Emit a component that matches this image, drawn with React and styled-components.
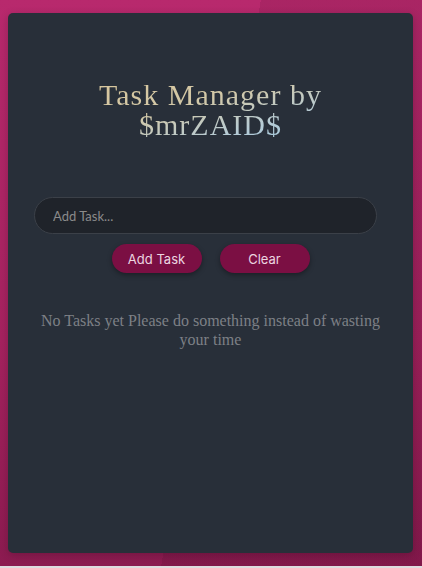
import React, { useState } from 'react'
import styled, { createGlobalStyle } from 'styled-components'

const GlobalStyle = createGlobalStyle`
    html, body {
        margin: 0;
        padding: 0;
        background-color: #dedcdf;
    }
    * {
        box-sizing: border-box;
    }
`;

const Page = styled.div`
    width: 100%;
    height: 566px;
    padding: 13px 9px 13px 8px;
    background:
        linear-gradient(100deg, rgba(0, 0, 0, 0) 50%, rgba(40, 0, 20, 0.1) 50%),
        linear-gradient(to bottom, #b8296d 0%, #a5225f 60%, #8b1b50 100%);
`;

const Card = styled.div`
    height: 540px;
    background-color: #282f39;
    border-radius: 5px;
    padding: 67px 26px 0;
    display: flex;
    flex-direction: column;
    align-items: center;
    box-shadow: 0 2px 8px rgba(0, 0, 0, 0.2);
`;

const Title = styled.h1`
    margin: 0 0 57px;
    font-family: "Liberation Serif", serif;
    font-weight: normal;
    font-size: 30px;
    line-height: 30px;
    letter-spacing: 1px;
    text-align: center;
    background: linear-gradient(165deg, #d8c69c 0%, #d2c8a8 40%, #b5cbd6 75%, #9dcae0 100%);
    -webkit-background-clip: text;
    background-clip: text;
    color: transparent;
`;

const TaskInput = styled.input`
    align-self: flex-start;
    width: 343px;
    height: 37px;
    border-radius: 19px;
    border: 1px solid #3b4048;
    background-color: #1f232a;
    padding: 0 18px;
    font-family: "Lato", sans-serif;
    font-size: 13px;
    color: #ccc;
    outline: none;

    &::placeholder {
        color: #8a8a8a;
    }
`;

const Buttons = styled.div`
    display: flex;
    gap: 18px;
    margin-top: 10px;
`;

const Button = styled.button`
    width: 90px;
    height: 29px;
    border: none;
    border-radius: 15px;
    background-color: #7b0f43;
    color: #ecd6e0;
    font-family: "Inter", sans-serif;
    font-size: 13px;
    box-shadow: 0 2px 5px rgba(0, 0, 0, 0.35);
    cursor: pointer;
`;

const Empty = styled.p`
    margin: 38px 0 0;
    font-family: "Liberation Serif", serif;
    font-size: 16px;
    line-height: 19px;
    color: #7d8086;
    text-align: center;
`;

export default function App() {
    const [text, setText] = useState('')
    const [tasks, setTasks] = useState([])

    const addTask = () => {
        if (!text.trim()) return
        setTasks([...tasks, text])
        setText('')
    }

    return (
        <>
            <GlobalStyle/>
            <Page>
                <Card>
                    <Title>Task Manager by<br/>$mrZAID$</Title>

                    <TaskInput
                        placeholder="Add Task..."
                        value={text}
                        onChange={e => setText(e.target.value)}/>

                    <Buttons>
                        <Button onClick={addTask}>Add Task</Button>
                        <Button onClick={() => setTasks([])}>Clear</Button>
                    </Buttons>

                    {tasks.length === 0
                        ? <Empty>No Tasks yet Please do something instead of wasting your time</Empty>
                        : tasks.map((t, i) => <Empty key={i}>{t}</Empty>)}
                </Card>
            </Page>
        </>
    )
}
